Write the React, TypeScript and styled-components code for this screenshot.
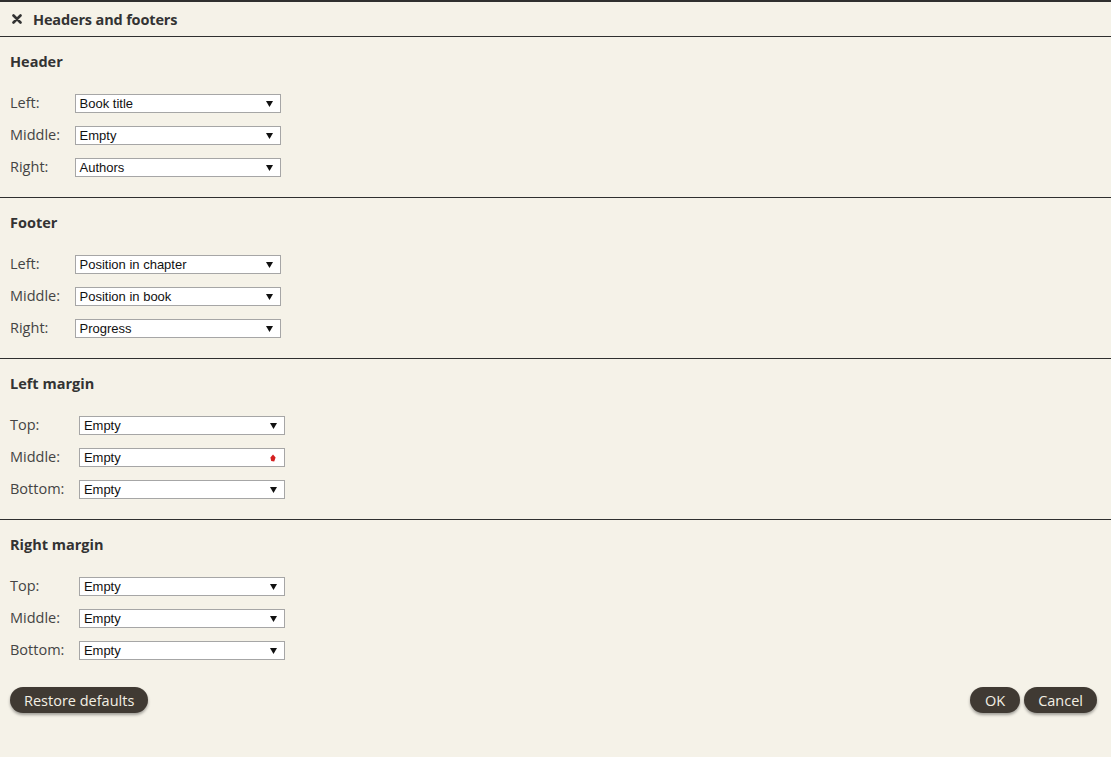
import React from "react";
import styled, { createGlobalStyle } from "styled-components";

const Global = createGlobalStyle`
  html, body { margin: 0; padding: 0; background: #f5f2e8; }
  body { font-family: "Open Sans", "Noto Sans", sans-serif; color: #333; }
`;

const Page = styled.div`
  width: 1111px;
  min-height: 757px;
  box-sizing: border-box;
  border-top: 2px solid #2f2f2f;
  background: #f5f2e8;
  display: flex;
  flex-direction: column;
`;

const TitleBar = styled.div`
  height: 34px;
  display: flex;
  align-items: center;
  gap: 11px;
  padding-left: 12px;
  border-bottom: 1px solid #2f2f2f;
  font-weight: 700;
  font-size: 14.5px;
  letter-spacing: -0.15px;
  color: #333;
`;

const CloseIcon = styled.svg`
  width: 10px;
  height: 10px;
  flex: none;
`;

const Section = styled.section<{ $last?: boolean }>`
  padding: 15px 10px 20px;
  border-bottom: ${(p) => (p.$last ? "none" : "1px solid #2f2f2f")};
`;

const Heading = styled.h3`
  margin: 0 0 22px;
  font-size: 14.5px;
  line-height: 20px;
  font-weight: 700;
  color: #333;
`;

const Rows = styled.div`
  display: grid;
  grid-template-columns: auto 206px;
  justify-content: start;
  column-gap: 14.5px;
  row-gap: 13px;
  align-items: center;
`;

const Label = styled.label`
  font-size: 14.5px;
  line-height: 19px;
  color: #444;
  margin-top: -3px;
`;

const Select = styled.div`
  height: 19px;
  box-sizing: border-box;
  border: 1px solid #a6a6a6;
  background: #fff;
  display: flex;
  align-items: center;
  justify-content: space-between;
  padding: 0 7px 0 4px;
  font-family: "Liberation Sans", Arial, sans-serif;
  font-size: 13px;
  color: #111;
`;

const Arrow = styled.svg`
  width: 7px;
  height: 6px;
`;

const CursorDot = styled.svg`
  width: 6px;
  height: 8px;
  margin-right: 1px;
`;

const Footer = styled.div`
  display: flex;
  justify-content: space-between;
  align-items: center;
  padding: 7px 14px 0 10px;
`;

const BtnGroup = styled.div`
  display: flex;
  gap: 4px;
`;

const Button = styled.button`
  height: 26px;
  min-width: 50px;
  padding: 0 14px;
  border: none;
  border-radius: 13px;
  background: #403a33;
  color: #f3efe4;
  font-family: "Open Sans", "Noto Sans", sans-serif;
  font-size: 14.5px;
  box-shadow: 0 2px 3px rgba(0, 0, 0, 0.35);
  cursor: pointer;
`;

type Row = { label: string; value: string; cursor?: boolean };
type Group = { title: string; rows: Row[] };

const groups: Group[] = [
  {
    title: "Header",
    rows: [
      { label: "Left:", value: "Book title" },
      { label: "Middle:", value: "Empty" },
      { label: "Right:", value: "Authors" },
    ],
  },
  {
    title: "Footer",
    rows: [
      { label: "Left:", value: "Position in chapter" },
      { label: "Middle:", value: "Position in book" },
      { label: "Right:", value: "Progress" },
    ],
  },
  {
    title: "Left margin",
    rows: [
      { label: "Top:", value: "Empty" },
      { label: "Middle:", value: "Empty", cursor: true },
      { label: "Bottom:", value: "Empty" },
    ],
  },
  {
    title: "Right margin",
    rows: [
      { label: "Top:", value: "Empty" },
      { label: "Middle:", value: "Empty" },
      { label: "Bottom:", value: "Empty" },
    ],
  },
];

export default function App() {
  return (
    <>
      <Global />
      <Page>
        <TitleBar>
          <CloseIcon viewBox="0 0 10 10">
            <path d="M1.5 1.5 L8.5 8.5 M8.5 1.5 L1.5 8.5" stroke="#333" strokeWidth="2.6" strokeLinecap="round" />
          </CloseIcon>
          Headers and footers
        </TitleBar>
        {groups.map((g, gi) => (
          <Section key={g.title} $last={gi === groups.length - 1}>
            <Heading>{g.title}</Heading>
            <Rows>
              {g.rows.map((r) => (
                <React.Fragment key={r.label}>
                  <Label>{r.label}</Label>
                  <Select>
                    <span>{r.value}</span>
                    {r.cursor ? (
                      <CursorDot viewBox="0 0 6 8">
                        <path d="M3 0.5 L5.6 3.5 L4.2 7.5 L1.2 7 L0.4 3.5 Z" fill="#d42020" />
                      </CursorDot>
                    ) : (
                      <Arrow viewBox="0 0 7 6">
                        <path d="M0 0 H7 L3.5 6 Z" fill="#111" />
                      </Arrow>
                    )}
                  </Select>
                </React.Fragment>
              ))}
            </Rows>
          </Section>
        ))}
        <Footer>
          <Button>Restore defaults</Button>
          <BtnGroup>
            <Button>OK</Button>
            <Button>Cancel</Button>
          </BtnGroup>
        </Footer>
      </Page>
    </>
  );
}
